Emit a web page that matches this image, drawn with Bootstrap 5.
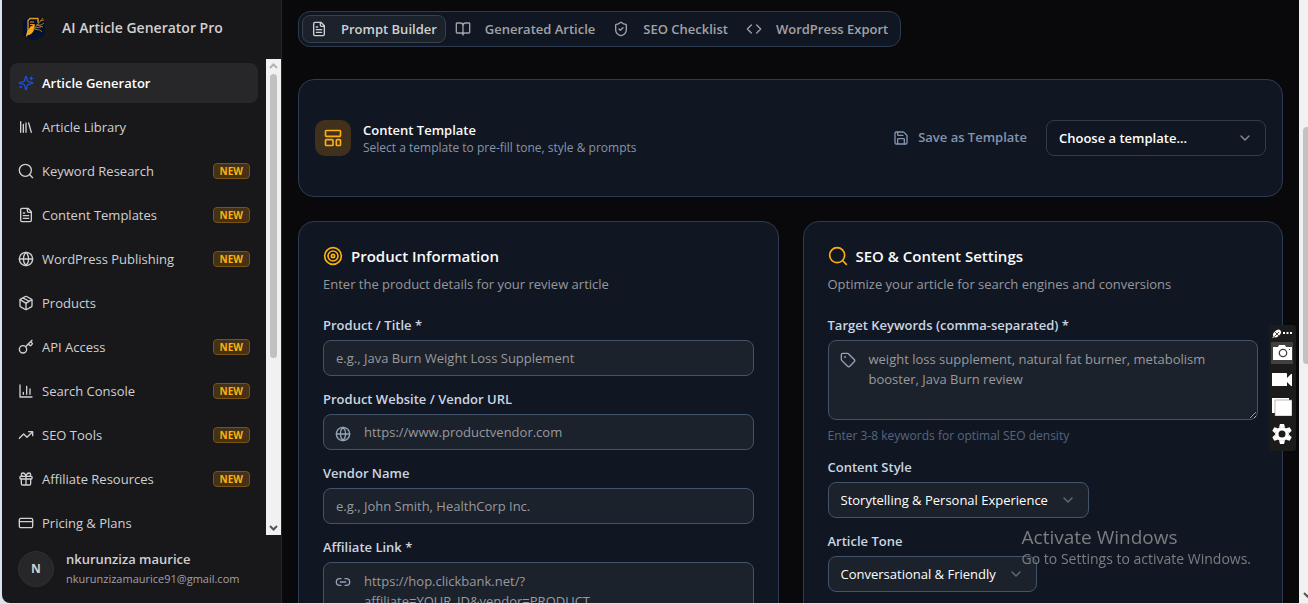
<!DOCTYPE html>
<html lang="en">
<head>
<meta charset="utf-8">
<meta name="viewport" content="width=device-width, initial-scale=1">
<title>AI Article Generator Pro</title>
<link href="https://cdn.jsdelivr.net/npm/bootstrap@5.3.0/dist/css/bootstrap.min.css" rel="stylesheet">
<style>
:root{--amber:#fbb010;--line:#2c3b50;--field-line:#43536b;--field:#1c222b;--panel:#111722}
body{font-family:"Open Sans","Noto Sans",sans-serif;font-size:13px;line-height:20px;background:#d9e4ee;color:#fafafa}
.app{height:100vh;padding:0 0 1px 2px;overflow:hidden}
.ico{width:16px;height:16px;flex:none;fill:none;stroke:currentColor;stroke-width:2;stroke-linecap:round;stroke-linejoin:round}
.ico-md{width:20px;height:20px}
.sidebar{width:280px;flex:none;background:#18181b;border-right:1px solid #27272a;border-bottom-left-radius:8px;color:#d0d0d2}
.brand{height:59px;flex:none;padding:0 20px 4px;gap:16px;font-size:14px;font-weight:600}
.brand svg{width:24px;height:28px}
.menu{padding:4px 8px;gap:4px;min-width:0}
.menu .nav-link{height:40px;flex:none;padding:0 8px;gap:8px;border-radius:8px;color:#d0d0d2;white-space:nowrap}
.menu .nav-link.active{background:#27272a;color:#fff;font-weight:600}
.menu .active .ico{color:#1d4fd8}
.tag-new{font-size:10px;line-height:14px;font-weight:700;padding:0 6px;border:1px solid #7b5212;border-radius:4px;background:#443117;color:var(--amber)}
.bar{background:#f1f1f1;flex:none;color:#555}
.bar-side{width:15px}
.bar-side .thumb{width:7px;height:284px;border-radius:4px;background:#c1c1c1}
.bar-page{width:9px;overflow:hidden}
.bar-page .thumb{width:9px;height:237px;margin:127px 0 0 4px;border-radius:4px 0 0 4px;background:#c1c1c1}
.bar svg{width:9px;height:15px;fill:none;stroke:currentColor;stroke-width:2}
.account{height:68px;flex:none;padding:0 16px;gap:12px}
.avatar{width:36px;height:36px;border-radius:50%;background:#27272a;border:1px solid #303034;font-size:12px;font-weight:700}
.mail{font-size:11px;line-height:20px;color:#a1a1aa}
.stage{background:#09090b;padding:11px 16px 0;gap:24px;min-width:0}
.tabs{padding:3px;border:1px solid var(--line);border-radius:12px;background:var(--panel)}
.tabs .nav-link{height:28px;padding:0 8px;gap:14px;border:1px solid transparent;border-radius:8px;background:none;color:#a1a1a6;font-weight:600}
.tabs .nav-link.active{background:#1b222b;border-color:#3a3f48;color:#d0d0d2}
.panel{background:var(--panel);border:1px solid var(--line);border-radius:16px}
.banner{height:118px;padding:0 16px}
.stamp{width:36px;height:36px;border-radius:10px;background:#40301c;color:var(--amber)}
.fine{font-size:12px;line-height:16px;color:#8594ab}
.btn-save{color:#8294b0;font-size:13px;font-weight:600;gap:9px;padding:0;margin-right:18px}
.pick{appearance:none;height:36px;padding:0 12px;border:1px solid #343a46;border-radius:8px;background:transparent;color:#fff;font-weight:600;width:100%}
.pick-wrap{position:relative;max-width:100%}
.pick-wrap .ico{position:absolute;right:13px;top:10px;color:#8a8d92;pointer-events:none}
.template-pick{width:220px}
.style-pick{width:261px}
.tone-pick{width:209px}
.settings .pick{background:var(--field);border-color:var(--field-line);font-weight:400}
.settings .ico{color:#666b75}
.columns{display:grid;grid-template-columns:1fr 1fr;gap:24px}
.sheet{padding:24px}
.sheet h2{font-size:15px;line-height:20px;font-weight:600;margin:0 0 8px;gap:8px}
.sheet h2 .ico{color:var(--amber)}
.lead-in{color:#96979d;margin:0 0 24px}
.caption{font-weight:600;line-height:14px;margin-bottom:8px;color:#cbd5e1;display:block}
.entry{position:relative;margin-bottom:16px}
.entry .form-control{background:var(--field);border:1px solid var(--field-line);border-radius:8px;color:#fff;font-size:13px;line-height:20px;padding:7px 12px;display:block}
.entry .form-control::placeholder{color:#98999f;opacity:1}
.entry input.form-control{height:36px}
.entry textarea.form-control{height:80px;padding-top:8px}
.entry .inset .form-control{padding-left:40px}
.inset{position:relative}
.inset>.ico{position:absolute;left:12px;top:12px;color:#94a3b8}
.hint{font-size:12px;line-height:16px;color:#56657f;margin:8px 0 0}
.watermark{position:fixed;right:57px;bottom:35px;font-size:14px;color:#7b7d81;pointer-events:none}
.watermark strong{display:block;font-weight:400;font-size:19px;line-height:24px}
.capture{position:fixed;right:12px;top:325px;width:27px;height:126px;padding:3px 2px 0;background:#1b1b1b;border-radius:3px}
.capture button{border:0;padding:0;margin-top:5px;background:none;width:22px;height:22px;display:grid;place-items:center}
.capture button.on{margin-top:2px;background:#414141}
.capture svg{display:block}
</style>
</head>
<body>
<svg class="d-none" aria-hidden="true">
<symbol id="sparkles" viewBox="0 0 24 24"><path d="M9.937 15.5A2 2 0 0 0 8.5 14.063l-6.135-1.582a.5.5 0 0 1 0-.962L8.5 9.936A2 2 0 0 0 9.937 8.5l1.582-6.135a.5.5 0 0 1 .963 0L14.063 8.5A2 2 0 0 0 15.5 9.937l6.135 1.581a.5.5 0 0 1 0 .964L15.5 14.063a2 2 0 0 0-1.437 1.437l-1.582 6.135a.5.5 0 0 1-.963 0zM20 3v4M22 5h-4M4 17v2M5 18H3"/></symbol>
<symbol id="library" viewBox="0 0 24 24"><path d="m16 6 4 14M12 6v14M8 8v12M4 4v16"/></symbol>
<symbol id="search" viewBox="0 0 24 24"><circle cx="11" cy="11" r="9"/><path d="m22 22-4.300-4.300"/></symbol>
<symbol id="file" viewBox="0 0 24 24"><path d="M15 2H6a2 2 0 0 0-2 2v16a2 2 0 0 0 2 2h12a2 2 0 0 0 2-2V7ZM14 2v4a2 2 0 0 0 2 2h4M10 9H8M16 13H8M16 17H8"/></symbol>
<symbol id="globe" viewBox="0 0 24 24"><circle cx="12" cy="12" r="10"/><path d="M12 2a14.5 14.5 0 0 0 0 20 14.5 14.5 0 0 0 0-20M2 12h20"/></symbol>
<symbol id="package" viewBox="0 0 24 24"><path d="M11 21.73a2 2 0 0 0 2 0l7-4A2 2 0 0 0 21 16V8a2 2 0 0 0-1-1.73l-7-4a2 2 0 0 0-2 0l-7 4A2 2 0 0 0 3 8v8a2 2 0 0 0 1 1.73zM12 22V12"/><path d="m3.3 7 7.703 4.734a2 2 0 0 0 1.994 0L20.7 7"/><path d="m7.5 4.27 9 5.15"/></symbol>
<symbol id="key" viewBox="0 0 24 24"><path d="m15.5 7.5 2.3 2.3a1 1 0 0 0 1.4 0l2.1-2.1a1 1 0 0 0 0-1.4L19 4"/><path d="m21 2-9.6 9.6"/><circle cx="7.5" cy="15.5" r="5.5"/></symbol>
<symbol id="chart" viewBox="0 0 24 24"><path d="M3 3v18h18M18 17V9M13 17V5M8 17v-3"/></symbol>
<symbol id="trend" viewBox="0 0 24 24"><path d="M22 7 13.5 15.5 8.5 10.5 2 17M16 7h6v6"/></symbol>
<symbol id="gift" viewBox="0 0 24 24"><rect x="3" y="8" width="18" height="4" rx="1"/><path d="M12 8v13M19 12v7a2 2 0 0 1-2 2H7a2 2 0 0 1-2-2v-7M7.5 8a2.5 2.5 0 0 1 0-5A4.8 8 0 0 1 12 8a4.8 8 0 0 1 4.5-5 2.5 2.5 0 0 1 0 5"/></symbol>
<symbol id="credit" viewBox="0 0 24 24"><rect x="2" y="5" width="20" height="14" rx="2"/><path d="M2 10h20"/></symbol>
<symbol id="book" viewBox="0 0 24 24"><path d="M12 7v14M3 18a1 1 0 0 1-1-1V4a1 1 0 0 1 1-1h5a4 4 0 0 1 4 4 4 4 0 0 1 4-4h5a1 1 0 0 1 1 1v13a1 1 0 0 1-1 1h-6a3 3 0 0 0-3 3 3 3 0 0 0-3-3z"/></symbol>
<symbol id="shield" viewBox="0 0 24 24"><path d="M20 13c0 5-3.5 7.5-7.66 8.95a1 1 0 0 1-.67-.01C7.5 20.5 4 18 4 13V6a1 1 0 0 1 1-1c2 0 4.500-1.200 6.240-2.720a1.170 1.170 0 0 1 1.520 0C14.510 3.810 17 5 19 5a1 1 0 0 1 1 1z"/><path d="m9 12 2 2 4-4"/></symbol>
<symbol id="code" viewBox="0 0 24 24"><path d="m16 18 6-6-6-6M8 6l-6 6 6 6"/></symbol>
<symbol id="layout" viewBox="0 0 24 24"><rect x="3" y="3" width="18" height="7" rx="1"/><rect x="3" y="14" width="9" height="7" rx="1"/><rect x="16" y="14" width="5" height="7" rx="1"/></symbol>
<symbol id="save" viewBox="0 0 24 24"><path d="M15.2 3a2 2 0 0 1 1.4.6l3.8 3.8a2 2 0 0 1 .6 1.4V19a2 2 0 0 1-2 2H5a2 2 0 0 1-2-2V5a2 2 0 0 1 2-2z"/><path d="M17 21v-7a1 1 0 0 0-1-1H8a1 1 0 0 0-1 1v7M7 3v4a1 1 0 0 0 1 1h7"/></symbol>
<symbol id="target" viewBox="0 0 24 24"><circle cx="12" cy="12" r="10"/><circle cx="12" cy="12" r="6"/><circle cx="12" cy="12" r="2"/></symbol>
<symbol id="label" viewBox="0 0 24 24"><path d="M12.586 2.586A2 2 0 0 0 11.172 2H4a2 2 0 0 0-2 2v7.172a2 2 0 0 0 .586 1.414l8.704 8.704a2.426 2.426 0 0 0 3.42 0l6.58-6.58a2.426 2.426 0 0 0 0-3.42z"/><circle cx="7.5" cy="7.5" r=".5"/></symbol>
<symbol id="link" viewBox="0 0 24 24"><path d="M9 17H7A5 5 0 0 1 7 7h2M15 7h2a5 5 0 1 1 0 10h-2M8 12h8"/></symbol>
<symbol id="chevron" viewBox="0 0 24 24"><path d="m6 9 6 6 6-6"/></symbol>
</svg>

<div class="app d-flex">
  <aside class="sidebar d-flex flex-column">
    <div class="brand d-flex align-items-center">
      <svg viewBox="0 0 24 28" aria-hidden="true"><path d="M12 1l11 6v14l-11 6-11-6V7z" fill="#04122e"/><path d="M6 19V6.500l2-2h8v4" fill="none" stroke="#e69b17" stroke-width="1.300"/><path d="M8 8h4M8 10.500h4M8 13h3" stroke="#d8951f" stroke-width="1"/><path d="M4 23c0-5 3-10 9-13l-1 6c-1 3-4 5-6 5z" fill="#f5a81a"/><path d="M11 16 21 4M14 11h5l3-2M16 9V5M15 11l6 2M12 15l6 1 2 2M13 14l6-1M18 7l4-1" fill="none" stroke="#b87d1c" stroke-width=".9"/></svg>
      <span>AI Article Generator Pro</span>
    </div>
    <div class="d-flex flex-grow-1 overflow-hidden">
      <nav class="menu nav flex-column flex-nowrap flex-grow-1" aria-label="Main">
        <a href="#" class="nav-link active d-flex align-items-center"><svg class="ico"><use href="#sparkles"/></svg>Article Generator</a>
        <a href="#" class="nav-link d-flex align-items-center"><svg class="ico"><use href="#library"/></svg>Article Library</a>
        <a href="#" class="nav-link d-flex align-items-center"><svg class="ico"><use href="#search"/></svg>Keyword Research<span class="tag-new ms-auto">NEW</span></a>
        <a href="#" class="nav-link d-flex align-items-center"><svg class="ico"><use href="#file"/></svg>Content Templates<span class="tag-new ms-auto">NEW</span></a>
        <a href="#" class="nav-link d-flex align-items-center"><svg class="ico"><use href="#globe"/></svg>WordPress Publishing<span class="tag-new ms-auto">NEW</span></a>
        <a href="#" class="nav-link d-flex align-items-center"><svg class="ico"><use href="#package"/></svg>Products</a>
        <a href="#" class="nav-link d-flex align-items-center"><svg class="ico"><use href="#key"/></svg>API Access<span class="tag-new ms-auto">NEW</span></a>
        <a href="#" class="nav-link d-flex align-items-center"><svg class="ico"><use href="#chart"/></svg>Search Console<span class="tag-new ms-auto">NEW</span></a>
        <a href="#" class="nav-link d-flex align-items-center"><svg class="ico"><use href="#trend"/></svg>SEO Tools<span class="tag-new ms-auto">NEW</span></a>
        <a href="#" class="nav-link d-flex align-items-center"><svg class="ico"><use href="#gift"/></svg>Affiliate Resources<span class="tag-new ms-auto">NEW</span></a>
        <a href="#" class="nav-link d-flex align-items-center"><svg class="ico"><use href="#credit"/></svg>Pricing &amp; Plans</a>
      </nav>
      <div class="bar bar-side d-flex flex-column align-items-center" aria-hidden="true">
        <svg viewBox="0 0 9 15" stroke-opacity=".4"><path d="m1 9 3.500-3.500L8 9"/></svg>
        <div class="thumb"></div>
        <svg class="mt-auto" viewBox="0 0 9 15"><path d="m1 6 3.500 3.500L8 6"/></svg>
      </div>
    </div>
    <div class="account d-flex align-items-center">
      <div class="avatar d-flex align-items-center justify-content-center">N</div>
      <div><div class="fw-semibold">nkurunziza maurice</div><div class="mail">nkurunzizamaurice91@gmail.com</div></div>
    </div>
  </aside>

  <main class="stage d-flex flex-column flex-grow-1 overflow-hidden">
    <div class="tabs nav align-self-start mb-2" role="tablist">
      <button type="button" role="tab" class="nav-link active d-flex align-items-center" aria-selected="true"><svg class="ico"><use href="#file"/></svg>Prompt Builder</button>
      <button type="button" role="tab" class="nav-link d-flex align-items-center"><svg class="ico"><use href="#book"/></svg>Generated Article</button>
      <button type="button" role="tab" class="nav-link d-flex align-items-center"><svg class="ico"><use href="#shield"/></svg>SEO Checklist</button>
      <button type="button" role="tab" class="nav-link d-flex align-items-center"><svg class="ico"><use href="#code"/></svg>WordPress Export</button>
    </div>

    <section class="panel banner d-flex align-items-center flex-shrink-0">
      <div class="stamp d-flex align-items-center justify-content-center me-2"><svg class="ico ico-md"><use href="#layout"/></svg></div>
      <div class="ms-1"><div class="fw-semibold">Content Template</div><div class="fine">Select a template to pre-fill tone, style &amp; prompts</div></div>
      <button type="button" class="btn btn-save d-flex align-items-center ms-auto"><svg class="ico"><use href="#save"/></svg>Save as Template</button>
      <div class="pick-wrap template-pick"><select class="pick" aria-label="Template"><option>Choose a template...</option></select><svg class="ico"><use href="#chevron"/></svg></div>
    </section>

    <div class="columns">
      <section class="panel sheet">
        <h2 class="d-flex align-items-center"><svg class="ico ico-md"><use href="#target"/></svg>Product Information</h2>
        <p class="lead-in">Enter the product details for your review article</p>
        <div class="entry"><label class="caption" for="title">Product / Title *</label><input id="title" class="form-control" placeholder="e.g., Java Burn Weight Loss Supplement"></div>
        <div class="entry"><label class="caption" for="site">Product Website / Vendor URL</label><div class="inset"><svg class="ico"><use href="#globe"/></svg><input id="site" class="form-control" placeholder="https://www.productvendor.com"></div></div>
        <div class="entry"><label class="caption" for="vendor">Vendor Name</label><input id="vendor" class="form-control" placeholder="e.g., John Smith, HealthCorp Inc."></div>
        <div class="entry"><label class="caption" for="aff">Affiliate Link *</label><div class="inset"><svg class="ico"><use href="#link"/></svg><textarea id="aff" class="form-control" placeholder="https://hop.clickbank.net/?&#10;affiliate=YOUR_ID&amp;vendor=PRODUCT"></textarea></div></div>
      </section>
      <section class="panel sheet">
        <h2 class="d-flex align-items-center"><svg class="ico ico-md"><use href="#search"/></svg>SEO &amp; Content Settings</h2>
        <p class="lead-in">Optimize your article for search engines and conversions</p>
        <div class="entry"><label class="caption" for="keys">Target Keywords (comma-separated) *</label><div class="inset"><svg class="ico"><use href="#label"/></svg><textarea id="keys" class="form-control" placeholder="weight loss supplement, natural fat burner, metabolism&#10;booster, Java Burn review"></textarea></div><p class="hint">Enter 3-8 keywords for optimal SEO density</p></div>
        <div class="entry settings"><label class="caption" for="style">Content Style</label><div class="pick-wrap style-pick"><select id="style" class="pick"><option>Storytelling &amp; Personal Experience</option></select><svg class="ico"><use href="#chevron"/></svg></div></div>
        <div class="entry settings"><label class="caption" for="tone">Article Tone</label><div class="pick-wrap tone-pick"><select id="tone" class="pick"><option>Conversational &amp; Friendly</option></select><svg class="ico"><use href="#chevron"/></svg></div></div>
      </section>
    </div>
  </main>
  <div class="bar bar-page d-flex flex-column" aria-hidden="true"><div class="thumb flex-shrink-0"></div><svg class="mt-auto ms-1 flex-shrink-0" viewBox="0 0 9 15"><path d="m1 5 3.500 3.500L8 5"/></svg></div>
</div>

<div class="watermark"><strong>Activate Windows</strong>Go to Settings to activate Windows.</div>
<div class="capture d-flex flex-column" role="toolbar" aria-label="Capture">
  <svg width="23" height="12" viewBox="0 0 23 12" aria-hidden="true"><ellipse cx="6" cy="5.500" rx="4.500" ry="3" transform="rotate(-40 6 5.500)" fill="#fff"/><path d="m2 10 6-6M4 4l4 4" stroke="#1b1b1b" stroke-width=".8"/><path d="m1.500 10 2-2" stroke="#fff"/><path d="M12 4h2v2h-2zM15.500 4h2v2h-2zM19 4h2v2h-2z" fill="#fff"/></svg>
  <button type="button" class="on" aria-label="Screenshot"><svg width="20" height="18" viewBox="0 0 20 18"><path d="M1 3h5l1-2h6l1 2h6v13H1z" fill="#fff"/><circle cx="11" cy="9" r="3.700" fill="#fff" stroke="#414141" stroke-width="1.300"/><path d="M17 5h1v1h-1z" fill="#414141"/></svg></button>
  <button type="button" aria-label="Record"><svg width="20" height="14" viewBox="0 0 20 14"><path d="M0 0h14q1 0 1 1v4l4-4h1v12h-1l-4-4v4H0z" fill="#fff"/></svg></button>
  <button type="button" aria-label="Gallery"><svg width="20" height="18" viewBox="0 0 20 18"><path d="M0 0h17v2H3v13H0z" fill="#fff"/><path d="M3 2h17v16H3z" fill="#fff" stroke="#888" stroke-width=".6"/></svg></button>
  <button type="button" aria-label="Settings"><svg width="20" height="20" viewBox="-10 -10 20 20"><g fill="#fff"><circle r="7"/><path id="tooth" d="M-3-6.500-2-10h4l1 3.500z"/><use href="#tooth" transform="rotate(60)"/><use href="#tooth" transform="rotate(120)"/><use href="#tooth" transform="rotate(180)"/><use href="#tooth" transform="rotate(240)"/><use href="#tooth" transform="rotate(300)"/></g><circle r="3.500" fill="#1b1b1b"/></svg></button>
</div>
<script src="https://cdn.jsdelivr.net/npm/bootstrap@5.3.0/dist/js/bootstrap.bundle.min.js"></script>
</body>
</html>
